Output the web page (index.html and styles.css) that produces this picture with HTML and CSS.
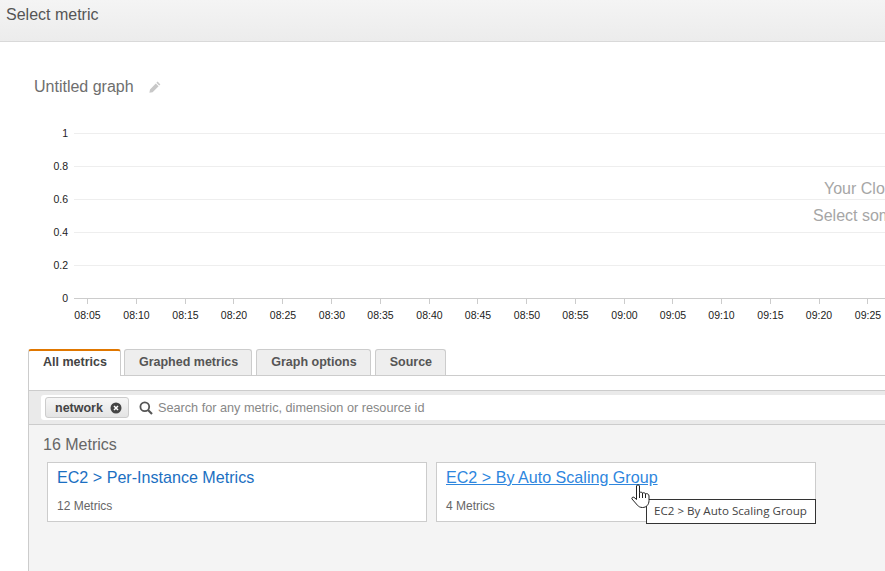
FILE: index.html
```html
<!DOCTYPE html>
<html lang="en">
<head>
    <meta charset="UTF-8">
    <meta name="viewport" content="width=device-width, initial-scale=1.0">
    <title>Select metric</title>
    <link rel="stylesheet" href="styles.css">
</head>
<body>
    <div class="header">Select metric</div>

    <div class="graph-title">
        <span>Untitled graph</span>
        <svg class="pencil" width="12" height="12" viewBox="0 0 12 12">
            <path d="M8.600 .6 11.400 3.400 10.200 4.600 7.400 1.800zM6.800 2.400 9.600 5.200 3.600 11.200 .4 11.800 1 8.400z" fill="#c8c8c8"/>
        </svg>
    </div>

    <svg class="chart" width="885" height="206" viewBox="0 118 885 206">
        <path class="grid" d="M74 133.500H885M74 166.500H885M74 199.500H885M74 232.500H885M74 265.500H885"/>
        <path class="axis" d="M74 298.500H885M87.500 298V304M136.500 298V304M185.500 298V304M233.500 298V304M282.500 298V304M331.500 298V304M380.500 298V304M429.500 298V304M477.500 298V304M526.500 298V304M575.500 298V304M624.500 298V304M672.500 298V304M721.500 298V304M770.500 298V304M819.500 298V304M867.500 298V304"/>
        <g class="y-labels">
            <text x="68" y="137">1</text>
            <text x="68" y="170">0.8</text>
            <text x="68" y="203">0.6</text>
            <text x="68" y="236">0.4</text>
            <text x="68" y="269">0.2</text>
            <text x="68" y="302">0</text>
        </g>
        <g class="x-labels">
            <text x="87.500" y="319">08:05</text>
            <text x="136.500" y="319">08:10</text>
            <text x="185.500" y="319">08:15</text>
            <text x="234" y="319">08:20</text>
            <text x="283" y="319">08:25</text>
            <text x="332" y="319">08:30</text>
            <text x="380.500" y="319">08:35</text>
            <text x="429.500" y="319">08:40</text>
            <text x="478" y="319">08:45</text>
            <text x="527" y="319">08:50</text>
            <text x="575.500" y="319">08:55</text>
            <text x="624.500" y="319">09:00</text>
            <text x="673" y="319">09:05</text>
            <text x="721.500" y="319">09:10</text>
            <text x="770.500" y="319">09:15</text>
            <text x="819" y="319">09:20</text>
            <text x="868" y="319">09:25</text>
        </g>
        <g class="empty-msg">
            <text x="824" y="194">Your CloudWatch graph is empty.</text>
            <text x="813" y="221">Select some metrics to appear here.</text>
        </g>
    </svg>

    <div class="metrics">
        <div class="tabs">
            <div class="tab active">All metrics</div>
            <div class="tab">Graphed metrics</div>
            <div class="tab">Graph options</div>
            <div class="tab">Source</div>
        </div>
        <div class="panel">
            <div class="search-bar">
                <div class="search-box">
                    <span class="token">network
                        <svg width="12" height="12" viewBox="0 0 12 12">
                            <circle cx="6" cy="6" r="5.500" fill="#444"/>
                            <path d="M4 4 8 8M8 4 4 8" stroke="#fff" stroke-width="1.500"/>
                        </svg>
                    </span>
                    <svg class="search-icon" width="14" height="14" viewBox="0 0 14 14">
                        <circle cx="5.800" cy="5.800" r="4.400" fill="none" stroke="#555" stroke-width="1.800"/>
                        <path d="M9 9 13 13" stroke="#555" stroke-width="2.200"/>
                    </svg>
                    <span class="placeholder">Search for any metric, dimension or resource id</span>
                </div>
            </div>
            <div class="count">16 Metrics</div>
            <div class="cards">
                <div class="card">
                    <a class="card-link">EC2 &gt; Per-Instance Metrics</a>
                    <div class="card-sub">12 Metrics</div>
                </div>
                <div class="card">
                    <a class="card-link hover">EC2 &gt; By Auto Scaling Group</a>
                    <div class="card-sub">4 Metrics</div>
                    <div class="tooltip">EC2 &gt; By Auto Scaling Group</div>
                    <svg class="cursor" width="19" height="24" viewBox="0 0 19 24">
                        <path d="M5.500 2C5.500 .5 8.500 .5 8.500 2V8.500C9.500 8 11 8 11.500 9 12.500 8.500 14 8.700 14.500 9.800 16 9.300 18 10 18 12V16.500C18 20.500 15.500 23.500 11.500 23.500 9 23.500 7.500 22.500 6.500 21.300L1 15C.3 14 1.800 12.500 3 13.300L5.500 15.500z" fill="#fff" stroke="#222" stroke-width="1"/>
                        <path d="M8.500 8.500V14M11.500 9V14M14.500 9.800V14" stroke="#222" stroke-width="1" fill="none"/>
                    </svg>
                </div>
            </div>
        </div>
    </div>
</body>
</html>
```

FILE: styles.css
```css
html, body {
    margin: 0;
    padding: 0;
    height: 100%;
    overflow: hidden;
}
body {
    width: 885px;
    height: 571px;
    background-color: white;
    font-family: "Liberation Sans", Arial, sans-serif;
    color: #555;
}
.header {
    height: 42px;
    padding: 6px 6px 0;
    box-sizing: border-box;
    border-bottom: 1px solid #d9d9d9;
    background: linear-gradient(#f4f4f4, #ececec);
    font-size: 16px;
    line-height: 18px;
    color: #555;
}
.graph-title {
    display: flex;
    align-items: center;
    height: 20px;
    margin: 35px 0 0 34px;
    font-size: 16px;
    color: #6e6e6e;
}
.pencil {
    margin-left: 15px;
}
.chart {
    display: block;
    margin-top: 21px;
}
.grid {
    stroke: #eeeeee;
    stroke-width: 1;
    fill: none;
}
.axis {
    stroke: #cccccc;
    stroke-width: 1;
    fill: none;
}
.y-labels text {
    font-size: 10.500px;
    fill: #222;
    text-anchor: end;
}
.x-labels text {
    font-size: 10.500px;
    fill: #222;
    text-anchor: middle;
}
.empty-msg text {
    font-size: 16px;
    fill: #a6a6a6;
}
.metrics {
    margin: 25px 0 0 28px;
}
.tabs {
    display: flex;
    height: 26px;
    gap: 4px;
}
.tab {
    box-sizing: border-box;
    height: 26px;
    padding: 0 13px 0 14px;
    border: 1px solid #ccc;
    border-bottom: none;
    border-radius: 3px 3px 0 0;
    background-color: #eeeeee;
    font-size: 12.500px;
    font-weight: bold;
    line-height: 24px;
    color: #555;
}
.tab.active {
    position: relative;
    z-index: 1;
    height: 27px;
    margin-right: -1px;
    border-top: 2px solid #e07700;
    background-color: white;
    color: #444;
    line-height: 23px;
}
.panel {
    border-top: 1px solid #ccc;
    border-left: 1px solid #ccc;
    height: 196px;
    box-sizing: border-box;
    padding-top: 14px;
    background-color: white;
}
.search-bar {
    height: 35px;
    box-sizing: border-box;
    border-top: 1px solid #ccc;
    border-bottom: 1px solid #ccc;
    background-color: #eaeaea;
    padding: 4px 0 0 12px;
}
.search-box {
    display: flex;
    align-items: center;
    height: 25px;
    padding-left: 4px;
    background-color: white;
    border-radius: 3px 0 0 3px;
}
.token {
    display: flex;
    align-items: center;
    gap: 7px;
    height: 21px;
    box-sizing: border-box;
    padding: 0 6px 0 9px;
    border: 1px solid #ccc;
    border-radius: 3px;
    background: linear-gradient(#f6f6f6, #e4e4e4);
    font-size: 12.500px;
    font-weight: bold;
    color: #444;
}
.search-icon {
    margin: 1px 5px 0 10px;
}
.placeholder {
    color: #888;
    font-size: 12.700px;
}
.count {
    background-color: #f4f4f4;
    height: 37px;
    padding: 11px 0 0 14px;
    box-sizing: border-box;
    font-size: 16px;
    color: #666;
}
.cards {
    display: flex;
    gap: 9px;
    height: 109px;
    padding-left: 18px;
    background-color: #f4f4f4;
}
.card {
    position: relative;
    box-sizing: border-box;
    width: 380px;
    height: 60px;
    padding: 5px 9px;
    border: 1px solid #ccc;
    background-color: white;
}
.card-link {
    font-size: 16.100px;
    color: #1b6fc2;
}
.card-link.hover {
    color: #2e86de;
    text-decoration: underline;
}
.card-sub {
    margin-top: 12px;
    font-size: 12px;
    color: #666;
}
.tooltip {
    position: absolute;
    top: 36px;
    right: -1px;
    box-sizing: border-box;
    width: 170px;
    height: 25px;
    border: 1px solid #333;
    background-color: white;
    padding-left: 7px;
    font-family: "Open Sans", sans-serif;
    font-size: 11.600px;
    line-height: 22px;
    color: #444;
    white-space: nowrap;
}
.cursor {
    position: absolute;
    left: 194px;
    top: 21px;
}
```
